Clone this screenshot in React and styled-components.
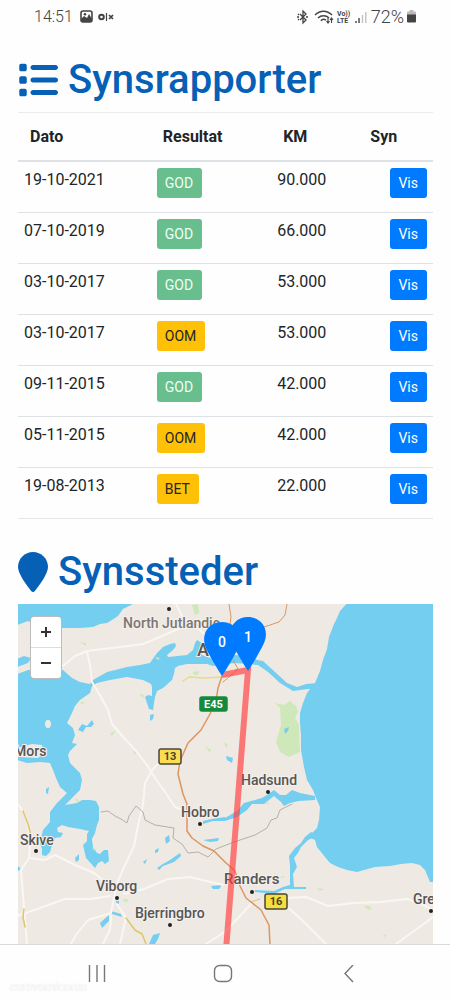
import React, { useState } from "react";
import styled, { createGlobalStyle } from "styled-components";
import { FaList, FaLocationPin } from "react-icons/fa6";

const GlobalStyle = createGlobalStyle`
  * {
    box-sizing: border-box;
  }
  body {
    margin: 0;
    background-color: #fefefe;
    color: #212529;
    font-family: Roboto, "Liberation Sans", sans-serif;
    font-size: 16px;
    line-height: 24px;
  }
`;

const StyledStatusBar = styled.header`
  display: flex;
  justify-content: space-between;
  align-items: center;
  height: 33px;
  padding: 0 34px;
  color: #444;
`;

const StyledStatusGroup = styled.div`
  display: flex;
  align-items: center;
  gap: ${(props) => props.$gap}px;
`;

const StyledStatusText = styled.span`
  font-size: ${(props) => (props.$large ? 18 : 16)}px;
  font-weight: 300;
`;

const StyledMain = styled.main`
  padding: 0 17px 0 18px;
`;

const StyledTitle = styled.h1`
  display: flex;
  align-items: center;
  gap: 10px;
  margin: 0;
  padding: ${(props) => (props.$first ? 23 : 28)}px 0 8px;
  color: #0560b6;
  font-size: 40px;
  font-weight: 500;
  line-height: 48px;
`;

const StyledSection = styled.section`
  padding-bottom: ${(props) => props.$space || 0}px;
`;

const StyledPinIcon = styled(FaLocationPin)`
  width: 30px;
  height: 40px;
`;

const StyledTable = styled.table`
  width: 100%;
  table-layout: fixed;
  border-collapse: separate;
  border-spacing: 0;
  border-top: 1px solid #e9ebed;
  border-bottom: 1px solid #e4e6e8;
`;

const StyledHeadCell = styled.th`
  width: ${(props) => props.$width};
  height: 48px;
  padding: 0 12px;
  border-bottom: 1px solid #dee2e6;
  font-weight: 700;
  text-align: left;
`;

const StyledCell = styled.td`
  height: 51px;
  padding: 6px;
  border-top: 1px solid #dee2e6;
  text-align: ${(props) => props.$align || "left"};
  vertical-align: top;
`;

const badgeColors = {
  GOD: { background: "#68be8d", text: "#eefff5" },
  OOM: { background: "#ffc107", text: "#212529" },
  BET: { background: "#ffc107", text: "#212529" },
};

const StyledBadge = styled.span`
  display: inline-block;
  padding: 5px 9px 5px 8px;
  border-radius: 3px;
  background-color: ${(props) => badgeColors[props.$result].background};
  color: ${(props) => badgeColors[props.$result].text};
  font-size: 14px;
  line-height: 20px;
`;

const StyledViewButton = styled.button`
  padding: 5px 9px 5px 8px;
  border: 0;
  border-radius: 3px;
  background-color: #007bff;
  color: white;
  font-family: inherit;
  font-size: 14px;
  line-height: 20px;
  cursor: pointer;
`;

const StyledMap = styled.div`
  position: relative;
  height: 340px;
  overflow: hidden;
  background-color: #efe9e4;
`;

const StyledMapDrawing = styled.svg`
  display: block;
  width: 100%;
  height: 100%;
`;

const StyledZoomControl = styled.div`
  position: absolute;
  top: 12px;
  left: 12px;
  display: flex;
  flex-direction: column;
  width: 32px;
  border: 1px solid #bcbcbc;
  border-radius: 4px;
  overflow: hidden;
`;

const StyledZoomButton = styled.button`
  display: flex;
  align-items: center;
  justify-content: center;
  height: 30px;
  padding: 0;
  border: 0;
  background-color: white;
  color: #333;
  cursor: pointer;
  & + & {
    height: 31px;
    border-top: 1px solid #ddd;
  }
`;

const StyledNavBar = styled.nav`
  position: relative;
  display: grid;
  grid-template-columns: repeat(3, 126px);
  justify-content: center;
  height: 56px;
  padding-right: 4px;
  border-top: 1px solid #d9d9d9;
`;

const StyledNavButton = styled.button`
  display: flex;
  align-items: center;
  justify-content: center;
  padding: 2px 0 0;
  border: 0;
  background: none;
  color: #777;
`;

const StyledWatermark = styled.span`
  position: absolute;
  left: 10px;
  bottom: 5px;
  color: #fefefe;
  font-size: 12px;
  font-style: italic;
  line-height: 16px;
  text-shadow: 0 0 1px #d5d5d5;
`;

const reports = [
  { date: "19-10-2021", result: "GOD", km: "90.000" },
  { date: "07-10-2019", result: "GOD", km: "66.000" },
  { date: "03-10-2017", result: "GOD", km: "53.000" },
  { date: "03-10-2017", result: "OOM", km: "53.000" },
  { date: "09-11-2015", result: "GOD", km: "42.000" },
  { date: "05-11-2015", result: "OOM", km: "42.000" },
  { date: "19-08-2013", result: "BET", km: "22.000" },
];

const places = [
  { name: "North Jutlandic", x: 123, y: 628, dot: [169, 609], color: "#7b7672", size: 14 },
  { name: "A", x: 197, y: 656, color: "#555", size: 18 },
  { name: "Mors", x: 14, y: 756, size: 14 },
  { name: "Hadsund", x: 241, y: 785, dot: [268, 792], size: 14 },
  { name: "Hobro", x: 181, y: 817, dot: [200, 824], size: 14 },
  { name: "Skive", x: 20, y: 845, dot: [36, 851], size: 14 },
  { name: "Viborg", x: 96, y: 891, dot: [117, 898], size: 14 },
  { name: "Randers", x: 224, y: 884, dot: [252, 892], size: 15 },
  { name: "Bjerringbro", x: 135, y: 918, dot: [170, 925], size: 14 },
  { name: "Gre", x: 413, y: 904, dot: [431, 911], size: 14 },
];

const roadSigns = [
  { name: "E45", x: 200, y: 697, width: 27, height: 14, fill: "#148a3c", stroke: "#148a3c", text: "white" },
  { name: "13", x: 159, y: 749, width: 22, height: 15, fill: "#fbdd55", stroke: "#4a4636", text: "#4a4420" },
  { name: "16", x: 265, y: 894, width: 22, height: 15, fill: "#f5df3c", stroke: "#4a4636", text: "#4a4420" },
];

const markers = [
  { label: "0", x: 222, y: 676 },
  { label: "1", x: 248, y: 671 },
];

const StatusBar = () => (
  <StyledStatusBar>
    <StyledStatusGroup $gap={7}>
      <StyledStatusText>14:51</StyledStatusText>
      <svg width="34" height="14" viewBox="0 0 34 14" fill="none">
        <rect x="1" y="1" width="11" height="11" rx="2" stroke="#444" strokeWidth="1.6" />
        <path d="M1 9 4 6 7 8 9 4 12 9V12H1Z" fill="#444" />
        <circle cx="5" cy="4.300" r="1.300" fill="#444" />
        <circle cx="21.500" cy="7" r="2.300" stroke="#444" strokeWidth="2" />
        <path d="M26.500 3V11" stroke="#444" strokeWidth="1.200" />
        <path d="M29 5 33 9M33 5 29 9" stroke="#444" strokeWidth="1.700" />
      </svg>
    </StyledStatusGroup>
    <StyledStatusGroup $gap={3}>
      <svg width="72" height="16" viewBox="0 0 72 16" fill="none">
        <g stroke="#444" strokeWidth="1.300">
          <path d="M4 5 10 11 7 14V2L10 5 4 11" />
          <path d="M1 8H3M10 8H12M2 5 3 6M2 11 3 10" />
          <path d="M19 6C24 1 31 1 36 6M22 9C25 6 30 6 33 9M25 12C26 10 28 10 30 11" strokeWidth="1.500" />
          <path d="M32 9V14M30.500 12 32 14 33.500 12M35.500 14V9M34 11 35.500 9 37 11" strokeWidth="1.100" />
        </g>
        <text x="41" y="7" fontSize="7" fontWeight="700" fill="#444">Vo))</text>
        <text x="41" y="14" fontSize="7" fontWeight="700" fill="#444">LTE</text>
        <path d="M60 14V12M63 14V9" stroke="#444" strokeWidth="1.400" />
        <path d="M66.500 14V6M69.800 14V3" stroke="#c2c2c2" strokeWidth="1.400" />
      </svg>
      <StyledStatusText $large>72%</StyledStatusText>
      <svg width="9" height="13" viewBox="0 0 9 13">
        <path d="M2.500 0H6.500V1.500H8Q9 1.500 9 2.500V5H0V2.500Q0 1.500 1 1.500H2.500Z" fill="#bbb" />
        <path d="M0 4.500H9V11.500Q9 12.500 8 12.500H1Q0 12.500 0 11.500Z" fill="#444" />
      </svg>
    </StyledStatusGroup>
  </StyledStatusBar>
);

const ReportTable = () => (
  <StyledTable>
    <thead>
      <tr>
        <StyledHeadCell $width="32%">Dato</StyledHeadCell>
        <StyledHeadCell $width="29%">Resultat</StyledHeadCell>
        <StyledHeadCell $width="21%">KM</StyledHeadCell>
        <StyledHeadCell $width="18%">Syn</StyledHeadCell>
      </tr>
    </thead>
    <tbody>
      {reports.map((report, index) => (
        <tr key={index}>
          <StyledCell>{report.date}</StyledCell>
          <StyledCell>
            <StyledBadge $result={report.result}>{report.result}</StyledBadge>
          </StyledCell>
          <StyledCell>{report.km}</StyledCell>
          <StyledCell $align="right">
            <StyledViewButton>Vis</StyledViewButton>
          </StyledCell>
        </tr>
      ))}
    </tbody>
  </StyledTable>
);

const MapWater = () => (
  <g fill="#74cef0">
    <path d="M17 600H137L133 604 123 609 118 616 112 620 107 623 100 624 93 627 80 628 63 628 50 625 40 627 28 621 17 625Z" />
    <path d="M17 659 24 656 31 658 28 663 20 666 17 667Z" />
    <path d="M17 674 28 670 63 670 72 678 80 682 90 684 93 680 107 672 127 667 140 665 150 663 157 653 163 647 170 644 175 643 176 646 173 650 167 655 168 657 178 656 187 655 193 650 195 643 197 640 202 643 200 649 202 655 213 659 235 655 250 656 257 660 263 661 275 672 287 683 297 687 306 684 318 683 318 689 308 689 293 691 280 683 268 672 258 665 235 663 213 666 207 664 187 664 178 666 175 668 174 674 172 680 163 688 157 691 155 697 153 710 149 709 147 703 145 697 148 695 152 696 152 687 151 684 143 680 127 677 110 680 97 683 92 686 90 693 80 700 75 706 72 713 67 723 73 728 75 735 72 743 77 744 70 751 68 755 70 763 80 773 82 780 80 790 72 798 65 805 77 803 82 800 90 800 96 801 99 807 99 820 97 825 95 833 92 839 93 847 97 853 100 854 104 850 108 850 109 861 105 864 102 861 98 863 95 868 86 858 83 845 87 841 87 834 89 831 80 829 68 827 62 825 57 828 58 832 63 833 61 837 55 838 53 842 50 852 46 856 42 855 42 849 40 843 43 830 50 822 50 812 57 803 67 793 60 787 56 778 53 770 50 763 40 762 27 763 17 760V757L38 758 44 753 42 745 32 744 17 748Z" />
    <path d="M435 600H350L340 611 337 618 334 624 329 637 327 649 323 660 320 671 315 683 307 693 303 703 300 713 300 723 301 735 301 750 304 767 307 780 313 790 316 798 320 807 319 820 317 828 308 837 315 840 317 847 325 857 330 863 338 867 347 870 357 872 375 867 390 866 401 864 412 863 420 865 425 870 430 882H435Z" />
    <path d="M225 818 237 811 244 803 251 801 262 798 267 795 274 790 280 795 286 795 292 790 300 793 315 796 315 800 299 801 290 803 284 806 281 802 274 796 264 804 252 804 247 810 237 817 225 821Z" />
    <path d="M311 832 305 837 301 843 295 848 289 856 290 866 290 885 283 887 274 891 255 890V892L274 894 285 889 306 889V887H294L293 874 297 867 294 858 298 853 301 847 308 840 317 836Z" />
    <path d="M78 730 82 724 87 726 92 720 94 724 91 727 86 727 83 732ZM150 715 154 714 153 719 150 721ZM203 821 212 819 225 817V821L213 821 203 824ZM203 840 219 838 218 841 210 842ZM157 868 163 864 170 860 180 853 181 856 174 862 163 866 159 870ZM165 838 169 835 170 841 166 844ZM155 850 159 848 158 852 155 853ZM143 862 147 859 145 864ZM75 858 79 854 79 860 76 862ZM46 789 49 787 48 794 46 793ZM100 923 109 915 109 921 102 928ZM111 911 121 914 122 917 112 914ZM153 935 160 933 158 939 155 944H149ZM211 886 222 885 219 889 213 889ZM18 866 21 869 18 871Z" />
    <path d="M226 756 233 758 232 763 227 760ZM116 901 119 901 119 904 116 903Z" />
  </g>
);

const MapRoads = () => (
  <g fill="none" strokeLinejoin="round" strokeLinecap="round">
    <g fill="#cfe8ba">
      <path d="M275 703 284 705 290 701 296 706 298 712 295 718 299 725 300 752 289 757 280 752 276 742 281 725 280 708Z" />
      <path d="M192 605 198 604 199 613 195 615ZM80 642 86 643 86 646ZM155 657 160 658 158 660ZM193 672 199 671 198 675 194 675ZM139 694 144 695 143 698ZM80 702 85 702 82 705ZM110 734 116 730 112 736ZM133 751 137 752 135 755ZM205 746 211 750 210 753ZM224 742 228 745 226 748ZM122 899 128 899 127 903ZM365 906 370 906 371 910 365 908ZM382 936 387 934 385 937ZM317 888 324 889 320 891ZM281 876 286 877 281 878ZM75 798 79 800 77 803ZM92 847 95 848 94 851ZM266 801 269 803 267 805Z" />
    </g>
    <path d="M284 729 289 727 288 731 285 734Z" fill="#74cef0" />
    <ellipse cx="48" cy="724" rx="3" ry="4" fill="#efe9e4" />
    <g stroke="#faf6f2" strokeWidth="2">
      <path d="M63 666 75 656 87 651 120 647 143 644 160 637 180 628 205 620" />
      <path d="M176 604C182 614 181 621 194 624L210 640" />
      <path d="M87 652 90 665 92 682 101 697 108 710 112 724 124 738 137 752 147 765 153 775 163 789 175 807 190 813" />
      <path d="M163 759 153 769 145 783 143 805 138 825 134 846 125 865 118 881 114 898 111 913 88 920 76 935 71 944" />
      <path d="M17 803C30 818 28 829 30 846L29 858 21 870 23 895 27 944" />
      <path d="M29 858 45 860 55 855 73 864 94 873 108 884" />
      <path d="M17 916 40 908 65 899 90 899 110 896" />
      <path d="M124 894 144 889 168 879 190 877 223 885" />
      <path d="M117 904 126 918 120 944M111 916 110 930 103 944" />
      <path d="M285 898 306 897 328 906 354 903 380 902 407 899 423 905 433 910" />
      <path d="M284 904 302 920 326 944M433 917 414 931 396 944M252 903 238 918 226 931 206 944" />
    </g>
    <path d="M101 812 108 811 115 816 121 819 127 823 129 816 136 806 143 812 145 820 155 825 174 828 173 838 182 844 188 853 198 852 208 857 216 849 234 842 255 835 267 828 271 820 277 818 280 810 292 804" stroke="#b6b0ab" />
    <g stroke="#dfc568">
      <path d="M23 811 28 824 32 840M24 909 23 917 25 927" strokeWidth="1.500" />
      <path d="M126 918 135 930 142 934 146 944" strokeWidth="1.500" />
      <path d="M183 681 189 677 204 678 222 677" stroke="#eadb83" strokeWidth="1.500" />
      <path d="M251 902 260 899" />
    </g>
    <g stroke="#dd955f">
      <path d="M229 604 231 617 229 632M287 604 285 615 279 622 264 627 256 636" />
      <path d="M233 660 238 669 229 677 223 682" />
      <path d="M222 676 218 688 216 701 210 714 201 730 188 743 180 761 178 774 183 794 187 804 187 831 192 838 203 846 214 851 225 862 235 871 240 886 246 898 261 910 269 925 270 944" strokeWidth="1.500" />
    </g>
  </g>
);

const MapLabels = () => (
  <g fontFamily='Roboto, "Liberation Sans", sans-serif'>
    {places.map((place) => (
      <g key={place.name}>
        <text
          x={place.x}
          y={place.y}
          fontSize={place.size}
          fontWeight="500"
          fill={place.color || "#555"}
          stroke="#f4f0ec"
          strokeWidth="2"
          paintOrder="stroke"
        >
          {place.name}
        </text>
        {place.dot && <circle cx={place.dot[0]} cy={place.dot[1]} r="2" fill="#222" />}
      </g>
    ))}
    {roadSigns.map((sign) => (
      <g key={sign.name}>
        <rect
          x={sign.x}
          y={sign.y}
          width={sign.width}
          height={sign.height}
          rx="2"
          fill={sign.fill}
          stroke={sign.stroke}
          strokeWidth="1.500"
        />
        <text
          x={sign.x + sign.width / 2}
          y={sign.y + 11}
          fontSize="11"
          fontWeight="700"
          textAnchor="middle"
          fill={sign.text}
        >
          {sign.name}
        </text>
      </g>
    ))}
  </g>
);

const InspectionMap = () => {
  const [zoom, setZoom] = useState(0);
  const scale = 1 + zoom / 4;
  return (
    <StyledMap>
      <StyledMapDrawing
        viewBox={`${225 - 207 / scale} ${774 - 170 / scale} ${415 / scale} ${340 / scale}`}
        preserveAspectRatio="xMidYMid slice"
      >
        <MapWater />
        <MapRoads />
        <MapLabels />
        <path
          d="M222 675 248 670 226 950"
          fill="none"
          stroke="#ff3b3b"
          strokeOpacity="0.65"
          strokeWidth="6"
        />
        {markers.map((marker) => (
          <g key={marker.label} transform={`translate(${marker.x} ${marker.y})`}>
            <path
              d="M0 0C-2 -3 -12 -19 -16 -28C-22 -42 -13 -54 0 -54C13 -54 22 -42 16 -28C12 -19 2 -3 0 0Z"
              fill="#007bff"
            />
            <text y="-29" fontSize="14" fontWeight="500" textAnchor="middle" fill="white">
              {marker.label}
            </text>
          </g>
        ))}
      </StyledMapDrawing>
      <StyledZoomControl>
        <StyledZoomButton aria-label="Zoom ind" onClick={() => setZoom(Math.min(zoom + 1, 8))}>
          <svg width="10" height="10" viewBox="0 0 10 10">
            <path d="M5 0V10M0 5H10" stroke="currentColor" strokeWidth="2" />
          </svg>
        </StyledZoomButton>
        <StyledZoomButton aria-label="Zoom ud" onClick={() => setZoom(Math.max(zoom - 1, 0))}>
          <svg width="10" height="10" viewBox="0 0 10 10">
            <path d="M0 5H10" stroke="currentColor" strokeWidth="2" />
          </svg>
        </StyledZoomButton>
      </StyledZoomControl>
    </StyledMap>
  );
};

const NavBar = () => (
  <StyledNavBar>
    <StyledNavButton aria-label="Seneste">
      <svg width="18" height="18" viewBox="0 0 18 18" stroke="currentColor" strokeWidth="1.400">
        <path d="M1.500 0V17M9 0V17M16.500 0V17" />
      </svg>
    </StyledNavButton>
    <StyledNavButton aria-label="Hjem">
      <svg width="20" height="20" viewBox="0 0 20 20" fill="none" stroke="currentColor" strokeWidth="1.400">
        <rect x="1.500" y="1.500" width="17" height="16" rx="5" />
      </svg>
    </StyledNavButton>
    <StyledNavButton aria-label="Tilbage">
      <svg width="10" height="18" viewBox="0 0 10 18" fill="none" stroke="currentColor" strokeWidth="1.400">
        <path d="M9 0 1 8.500 9 17" />
      </svg>
    </StyledNavButton>
    <StyledWatermark>eurovomicorus</StyledWatermark>
  </StyledNavBar>
);

const App = () => (
  <>
    <GlobalStyle />
    <StatusBar />
    <StyledMain>
      <StyledSection $space={1}>
        <StyledTitle $first>
          <FaList size={40} />
          Synsrapporter
        </StyledTitle>
        <ReportTable />
      </StyledSection>
      <StyledSection>
        <StyledTitle as="h2">
          <StyledPinIcon />
          Synssteder
        </StyledTitle>
        <InspectionMap />
      </StyledSection>
    </StyledMain>
    <NavBar />
  </>
);

export default App;
